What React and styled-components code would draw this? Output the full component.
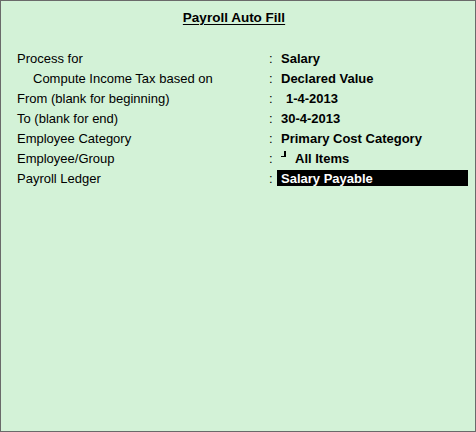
import React from 'react';
import styled, { createGlobalStyle } from 'styled-components';

const GlobalStyle = createGlobalStyle`
  html, body {
    margin: 0;
    padding: 0;
    background: #d3f2d7;
  }
`;

const Screen = styled.div`
  box-sizing: border-box;
  width: 476px;
  height: 432px;
  background: #d3f2d7;
  border: 1px solid #6a6a6a;
  font-family: 'Liberation Sans', Arial, sans-serif;
  font-size: 13px;
  color: #000;
`;

const Title = styled.div`
  display: flex;
  justify-content: center;
  padding: 9px 0 0 0;
  height: 47px;
  box-sizing: border-box;
`;

const TitleText = styled.span`
  font-weight: bold;
  font-size: 13.5px;
  text-decoration: underline;
  text-underline-offset: 2px;
  margin-left: -8px;
`;

const Form = styled.div`
  display: flex;
  flex-direction: column;
  padding-left: 16px;
`;

const Row = styled.div`
  display: flex;
  align-items: center;
  height: 20px;
`;

const Label = styled.div`
  width: 252px;
  padding-left: ${(p) => (p.indent ? '16px' : '0')};
  box-sizing: border-box;
`;

const Colon = styled.div`
  width: 8px;
`;

const Value = styled.div`
  display: flex;
  align-items: center;
  box-sizing: border-box;
  font-weight: bold;
  height: 16px;
  padding-left: ${(p) => p.pad || 4}px;
  ${(p) =>
    p.selected &&
    `
    background: #000;
    color: #fff;
    width: 191px;
  `}
`;

const Tree = styled.span`
  align-self: flex-start;
  width: 3px;
  height: 5px;
  margin-top: 1px;
  margin-right: 9px;
  border-right: 2px solid #000;
  border-bottom: 1px solid #000;
`;

const rows = [
  { label: 'Process for', value: 'Salary' },
  { label: 'Compute Income Tax based on', value: 'Declared Value', indent: true },
  { label: 'From (blank for beginning)', value: '1-4-2013', pad: 9 },
  { label: 'To (blank for end)', value: '30-4-2013' },
  { label: 'Employee Category', value: 'Primary Cost Category' },
  { label: 'Employee/Group', value: 'All Items', tree: true, pad: 4 },
  { label: 'Payroll Ledger', value: 'Salary Payable', selected: true },
];

const App = () => (
  <>
    <GlobalStyle />
    <Screen>
      <Title>
        <TitleText>Payroll Auto Fill</TitleText>
      </Title>
      <Form>
        {rows.map((r) => (
          <Row key={r.label}>
            <Label indent={r.indent}>{r.label}</Label>
            <Colon>:</Colon>
            <Value pad={r.selected ? 4 : r.pad} selected={r.selected}>
              {r.tree && <Tree />}
              {r.value}
            </Value>
          </Row>
        ))}
      </Form>
    </Screen>
  </>
);

export default App;
